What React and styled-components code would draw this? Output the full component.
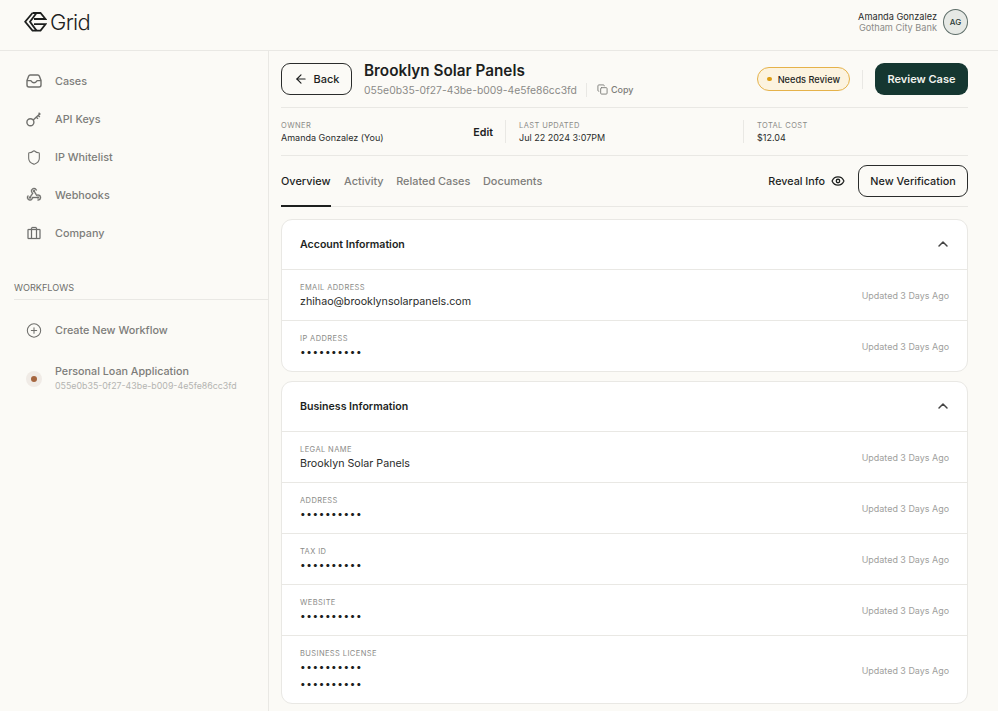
import styled, { createGlobalStyle } from "styled-components";
import { ArrowLeft, ChevronUp, CirclePlus, Copy, Eye, Shield } from "lucide-react";
import { PiSuitcase, PiWebhooksLogo } from "react-icons/pi";

const caseId = "055e0b35-0f27-43be-b009-4e5fe86cc3fd";
const hidden = "••••••••••";

const accountRows = [
  { label: "Email Address", value: "zhihao@brooklynsolarpanels.com" },
  { label: "IP Address", secret: true },
];

const businessRows = [
  { label: "Legal Name", value: "Brooklyn Solar Panels" },
  { label: "Address", secret: true },
  { label: "Tax ID", secret: true },
  { label: "Website", secret: true },
  { label: "Business License", secret: true, lines: 2 },
];

function Logo() {
  return (
    <svg width="23" height="20" viewBox="0 0 23 20" fill="none" stroke="#1d1f1e" strokeWidth="1.8">
      <path d="M8.5 1L1.2 9.8l7.3 8.8h8l5-6.4H10" />
      <path d="M8.5 1h8l5 6H10" />
      <path d="M12.5 1L6 9.8l6.5 8.8" />
    </svg>
  );
}

function TrayIcon() {
  return (
    <svg width="16" height="14" viewBox="0 0 16 14" fill="none" stroke="currentColor" strokeWidth="1.4">
      <path d="M1 6.4L2.6 2.2C2.9 1.4 3.5 1 4.2 1h7.6c.7 0 1.3.4 1.6 1.2L15 6.4V11c0 1.1-.9 2-2 2H3c-1.1 0-2-.9-2-2z" />
      <path d="M1 6.6h3.4c.6 0 .9.3 1.2.9.4.8 1.2 1.2 2.4 1.2s2-.4 2.4-1.2c.3-.6.6-.9 1.2-.9H15" />
    </svg>
  );
}

function KeyIcon() {
  return (
    <svg width="16" height="16" viewBox="0 0 16 16" fill="none" stroke="currentColor" strokeWidth="1.4">
      <circle cx="4.4" cy="11.2" r="3.5" />
      <path d="M7.2 9l7-6.4M10.4 6l1.6 1.7M12.2 4.4l1.6 1.5M12.6 1.8l1.8 1.8" />
    </svg>
  );
}

function CardBlock({ title, rows }) {
  return (
    <Card>
      <CardHeader>
        <CardTitle>{title}</CardTitle>
        <Chevron><ChevronUp size={16} strokeWidth={2.2} color="#444" /></Chevron>
      </CardHeader>
      {rows.map((row) => (
        <Row key={row.label}>
          <div>
            <RowLabel>{row.label}</RowLabel>
            {row.secret ? (
              Array.from({ length: row.lines || 1 }).map((_, i) => <Dots key={i}>{hidden}</Dots>)
            ) : (
              <RowValue>{row.value}</RowValue>
            )}
          </div>
          <Updated>Updated 3 Days Ago</Updated>
        </Row>
      ))}
    </Card>
  );
}

export default function App() {
  return (
    <>
      <GlobalStyle />
      <Page>
        <TopBar>
          <Brand>
            <Logo />
            <BrandName>Grid</BrandName>
          </Brand>
          <UserBox>
            <UserText>
              <UserName>Amanda Gonzalez</UserName>
              <UserOrg>Gotham City Bank</UserOrg>
            </UserText>
            <Avatar>AG</Avatar>
          </UserBox>
        </TopBar>
        <Body>
          <Sidebar>
            <Nav>
              <NavItem><NavIcon><TrayIcon /></NavIcon>Cases</NavItem>
              <NavItem><NavIcon><KeyIcon /></NavIcon>API Keys</NavItem>
              <NavItem><NavIcon><Shield size={17} strokeWidth={1.6} /></NavIcon>IP Whitelist</NavItem>
              <NavItem><NavIcon><PiWebhooksLogo size={20} stroke="currentColor" strokeWidth={6} /></NavIcon>Webhooks</NavItem>
              <NavItem><NavIcon><PiSuitcase size={19} stroke="currentColor" strokeWidth={4} /></NavIcon>Company</NavItem>
            </Nav>
            <SectionLabel>Workflows</SectionLabel>
            <NavItem><NavIcon><CirclePlus size={17} strokeWidth={1.6} /></NavIcon>Create New Workflow</NavItem>
            <WorkflowItem>
              <NavIcon><StatusRing><StatusDot /></StatusRing></NavIcon>
              <div>
                <WorkflowName>Personal Loan Application</WorkflowName>
                <WorkflowId>{caseId}</WorkflowId>
              </div>
            </WorkflowItem>
          </Sidebar>
          <Main>
            <TitleRow>
              <BackButton><ArrowLeft size={14} strokeWidth={2} />Back</BackButton>
              <TitleBlock>
                <Title>Brooklyn Solar Panels</Title>
                <IdLine>
                  <CaseId>{caseId}</CaseId>
                  <CopyLink><Copy size={11} strokeWidth={2} />Copy</CopyLink>
                </IdLine>
              </TitleBlock>
              <Badge><BadgeDot />Needs Review</Badge>
              <VSep />
              <PrimaryButton>Review Case</PrimaryButton>
            </TitleRow>
            <MetaRow>
              <MetaCell $width="224px">
                <MetaLabel>Owner</MetaLabel>
                <MetaValue>Amanda Gonzalez (You)</MetaValue>
                <EditLink>Edit</EditLink>
              </MetaCell>
              <MetaCell $width="238px" $divided>
                <MetaLabel>Last Updated</MetaLabel>
                <MetaValue>Jul 22 2024 3:07PM</MetaValue>
              </MetaCell>
              <MetaCell $divided>
                <MetaLabel>Total Cost</MetaLabel>
                <MetaValue>$12.04</MetaValue>
              </MetaCell>
            </MetaRow>
            <TabRow>
              <Tabs>
                <Tab $active>Overview</Tab>
                <Tab>Activity</Tab>
                <Tab>Related Cases</Tab>
                <Tab>Documents</Tab>
              </Tabs>
              <Reveal>Reveal Info<Eye size={14} strokeWidth={2.2} /></Reveal>
              <OutlineButton>New Verification</OutlineButton>
            </TabRow>
            <CardBlock title="Account Information" rows={accountRows} />
            <CardBlock title="Business Information" rows={businessRows} />
          </Main>
        </Body>
      </Page>
    </>
  );
}

const GlobalStyle = createGlobalStyle`
  html, body {
    margin: 0;
    height: 711px;
    overflow: hidden;
    background: #fbfaf6;
    font-family: Inter, "Liberation Sans", sans-serif;
    color: #1d1f1e;
  }
  * { box-sizing: border-box; }
`;

const Page = styled.div`
  width: 998px;
  height: 711px;
  overflow: hidden;
  background: #fbfaf6;
`;

const TopBar = styled.header`
  display: flex;
  align-items: center;
  justify-content: space-between;
  height: 51px;
  padding: 0 30px 6px 24px;
  border-bottom: 1px solid #e9e8e4;
`;

const Brand = styled.div`
  display: flex;
  align-items: center;
  gap: 3px;
`;

const BrandName = styled.span`
  font-size: 22px;
  font-weight: 300;
  letter-spacing: -0.7px;
  line-height: 24px;
`;

const UserBox = styled.div`
  display: flex;
  align-items: center;
  gap: 6px;
`;

const UserText = styled.div`
  padding-top: 1px;
  text-align: right;
  font-size: 9.2px;
  line-height: 10.5px;
`;

const UserName = styled.div`
  color: #2a2c2b;
`;

const UserOrg = styled.div`
  color: #8b8b88;
`;

const Avatar = styled.div`
  display: flex;
  align-items: center;
  justify-content: center;
  width: 25px;
  height: 26px;
  border: 1px solid #5e6e69;
  border-radius: 50%;
  background: #e6e9e5;
  font-size: 8px;
  font-weight: 500;
  color: #2c3c37;
`;

const Body = styled.div`
  display: flex;
  height: 660px;
`;

const Sidebar = styled.aside`
  width: 269px;
  flex-shrink: 0;
  padding-top: 11px;
  border-right: 1px solid #e9e8e4;
`;

const Nav = styled.nav`
  display: flex;
  flex-direction: column;
  margin-bottom: 30px;
`;

const NavItem = styled.div`
  display: flex;
  align-items: center;
  gap: 13px;
  height: 38.1px;
  padding-left: 26px;
  font-size: 10.8px;
  font-weight: 500;
  color: #7d7d7a;
`;

const NavIcon = styled.span`
  display: flex;
  align-items: center;
  justify-content: center;
  width: 16px;
  height: 16px;
  flex-shrink: 0;
  color: #6f6f6c;
`;

const SectionLabel = styled.div`
  margin: 0 0 11px 14px;
  padding-bottom: 5px;
  border-bottom: 1px solid #e9e8e4;
  font-size: 9.15px;
  line-height: 12px;
  text-transform: uppercase;
  color: #6f6f6c;
`;

const WorkflowItem = styled(NavItem)`
  margin-top: 10px;
`;

const StatusRing = styled.span`
  display: flex;
  align-items: center;
  justify-content: center;
  width: 16px;
  height: 16px;
  border-radius: 50%;
  background: #f0ebe6;
`;

const StatusDot = styled.span`
  width: 6px;
  height: 6px;
  border-radius: 50%;
  background: #a5663f;
`;

const WorkflowName = styled.div`
  font-size: 10.75px;
  line-height: 14px;
`;

const WorkflowId = styled.div`
  font-size: 8.84px;
  font-weight: 400;
  line-height: 13px;
  color: #b4b4b1;
`;

const Main = styled.main`
  flex: 1;
  min-width: 0;
  padding: 0 30px 0 12px;
`;

const TitleRow = styled.div`
  display: flex;
  align-items: center;
  height: 57px;
  border-bottom: 1px solid #e9e8e4;
`;

const BackButton = styled.button`
  display: flex;
  align-items: center;
  justify-content: center;
  gap: 6px;
  width: 71px;
  height: 32px;
  margin-right: 12px;
  border: 1px solid #2a2c2b;
  border-radius: 9px;
  background: transparent;
  font: 500 11px Inter, sans-serif;
  color: #1d1f1e;
`;

const TitleBlock = styled.div`
  flex: 1;
`;

const Title = styled.div`
  font-size: 15.3px;
  font-weight: 600;
  line-height: 18px;
`;

const IdLine = styled.div`
  display: flex;
  align-items: center;
  margin-top: 3px;
`;

const CaseId = styled.span`
  padding-right: 9px;
  border-right: 1px solid #e9e8e4;
  font-size: 10.35px;
  line-height: 14px;
  color: #8b8b88;
`;

const CopyLink = styled.span`
  display: flex;
  align-items: center;
  gap: 3px;
  margin-left: 10px;
  font-size: 9px;
  font-weight: 500;
  color: #7d7d7a;
`;

const Badge = styled.div`
  display: flex;
  align-items: center;
  gap: 6px;
  height: 24px;
  padding: 0 9px;
  border: 1px solid #e5b24a;
  border-radius: 12px;
  background: #fcf3df;
  font-size: 9.2px;
  font-weight: 500;
`;

const BadgeDot = styled.span`
  width: 4.5px;
  height: 4.5px;
  border-radius: 50%;
  background: #dc9c12;
`;

const VSep = styled.span`
  width: 1px;
  height: 19px;
  margin: 0 12px;
  background: #e9e8e4;
`;

const PrimaryButton = styled.button`
  width: 93px;
  height: 32px;
  border: 0;
  border-radius: 9px;
  background: #153731;
  font: 600 11px Inter, sans-serif;
  color: #f3f3ee;
`;

const MetaRow = styled.div`
  display: flex;
  align-items: center;
  height: 48px;
  border-bottom: 1px solid #e9e8e4;
`;

const MetaCell = styled.div`
  position: relative;
  width: ${(p) => p.$width || "auto"};
  height: 23px;
  padding-top: 1px;
  padding-left: ${(p) => (p.$divided ? "13px" : "0")};
  border-left: ${(p) => (p.$divided ? "1px solid #e9e8e4" : "0")};
`;

const MetaLabel = styled.div`
  font-size: 7.5px;
  line-height: 10px;
  letter-spacing: 0.4px;
  text-transform: uppercase;
  color: #8b8b88;
`;

const MetaValue = styled.div`
  margin-top: 1px;
  font-size: 9px;
  line-height: 12px;
  color: #2a2c2b;
`;

const EditLink = styled.span`
  position: absolute;
  top: 6px;
  right: 12px;
  font-size: 10.7px;
  font-weight: 600;
`;

const TabRow = styled.div`
  display: flex;
  align-items: center;
  height: 51px;
  margin-bottom: 12px;
  border-bottom: 1px solid #e9e8e4;
`;

const Tabs = styled.div`
  display: flex;
  gap: 12.6px;
  flex: 1;
  align-self: stretch;
`;

const Tab = styled.div`
  display: flex;
  align-items: center;
  margin-bottom: -1px;
  padding-right: ${(p) => (p.$active ? "1px" : "0")};
  border-bottom: 2px solid ${(p) => (p.$active ? "#1d1f1e" : "transparent")};
  font-size: 10.9px;
  font-weight: 500;
  color: ${(p) => (p.$active ? "#1d1f1e" : "#7d7d7a")};
`;

const Reveal = styled.div`
  display: flex;
  align-items: center;
  gap: 6px;
  margin-right: 13px;
  font-size: 10.75px;
  font-weight: 500;
`;

const OutlineButton = styled.button`
  width: 110px;
  height: 32px;
  border: 1px solid #2a2c2b;
  border-radius: 9px;
  background: transparent;
  font: 500 10.8px Inter, sans-serif;
  color: #1d1f1e;
`;

const Card = styled.section`
  margin-bottom: 9px;
  border: 1px solid #e9e8e4;
  border-radius: 11px;
  background: #fff;
`;

const CardHeader = styled.div`
  display: flex;
  align-items: center;
  justify-content: space-between;
  height: 49px;
  padding: 0 16px 0 18px;
`;

const CardTitle = styled.div`
  font-size: 10.6px;
  font-weight: 600;
`;

const Chevron = styled.span`
  display: flex;
  margin-top: -1px;
`;

const Row = styled.div`
  display: flex;
  justify-content: space-between;
  min-height: 51px;
  padding: 13px 18px 10px;
  border-top: 1px solid #e9e8e4;
`;

const RowLabel = styled.div`
  font-size: 7.5px;
  line-height: 10px;
  letter-spacing: 0.4px;
  text-transform: uppercase;
  color: #8b8b88;
`;

const RowValue = styled.div`
  margin-top: 2px;
  font-size: 10.7px;
  line-height: 14px;
  color: #2a2c2b;
`;

const Dots = styled.div`
  height: 17px;
  font-size: 10px;
  line-height: 14px;
  letter-spacing: 0.6px;
  color: #1d1f1e;
`;

const Updated = styled.span`
  align-self: center;
  margin-top: -2px;
  font-size: 8.95px;
  color: #a0a09d;
`;
